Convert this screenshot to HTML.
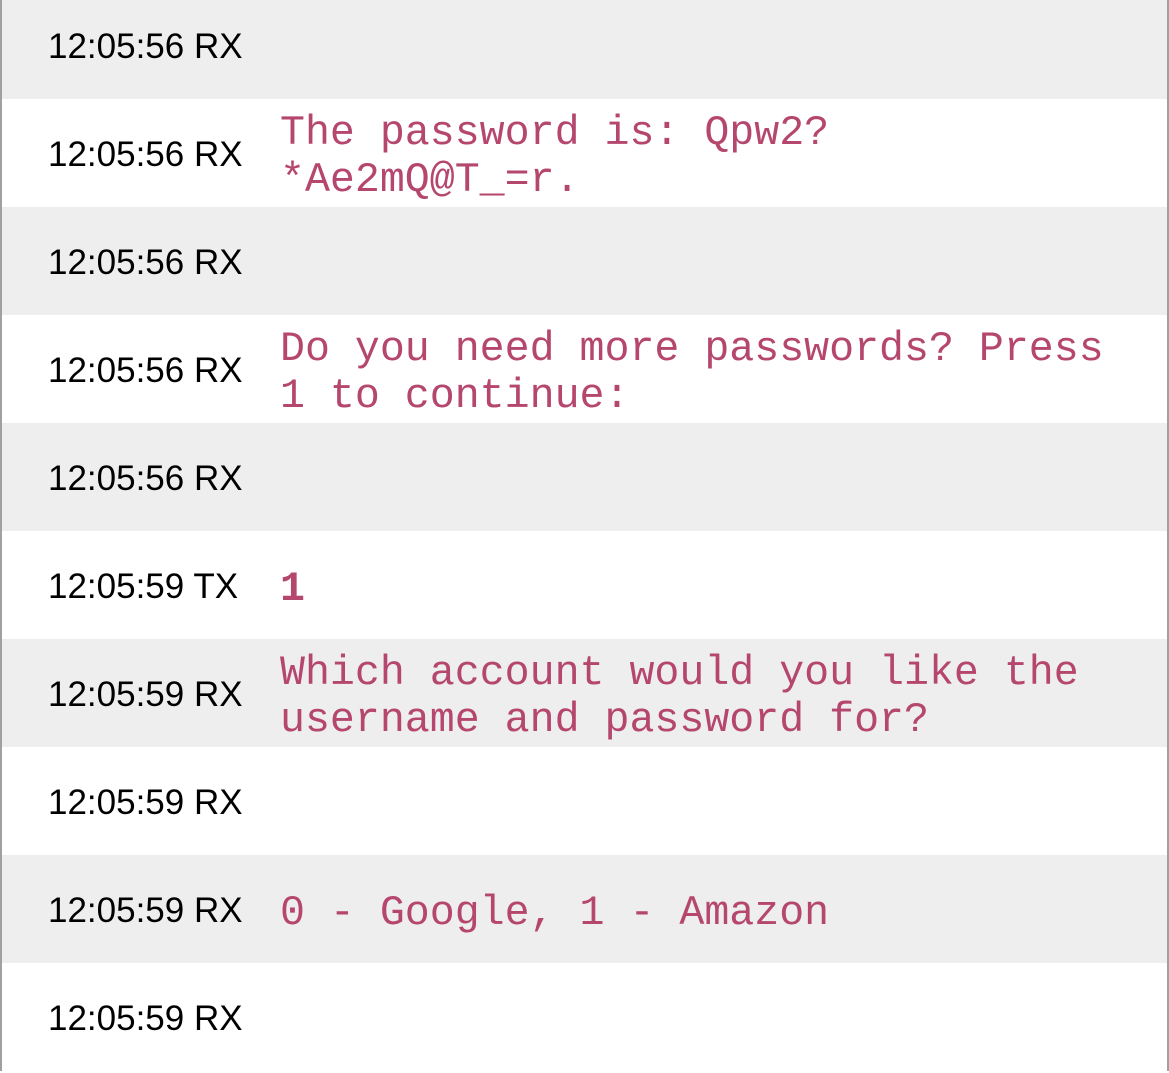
<!DOCTYPE html>
<html><head><meta charset="utf-8"><style>
body{margin:0;width:1169px;height:1068px;overflow:hidden;background:#fff;}
.wrap{position:absolute;left:0;top:-9px;width:1165px;border-left:2px solid #a0a0a0;border-right:2px solid #a0a0a0;}
.row{height:108px;position:relative;}
.g{background:#eeeeee;}
.ts{position:absolute;left:46px;top:2px;height:108px;line-height:108px;font-family:"Liberation Sans",sans-serif;font-size:35px;color:#000;white-space:nowrap;}
.m{position:absolute;left:278px;top:4px;height:108px;width:880px;display:flex;align-items:center;font-family:"Liberation Mono",monospace;font-size:41.6px;line-height:47px;color:#b5466e;white-space:pre-wrap;}
.m span{display:block;}
.b{font-weight:bold;}
</style></head><body><div class="wrap">
<div class="row g"><div class="ts">12:05:56 RX</div></div>
<div class="row"><div class="ts">12:05:56 RX</div><div class="m"><span>The password is: Qpw2?<br>*Ae2mQ@T_=r.</span></div></div>
<div class="row g"><div class="ts">12:05:56 RX</div></div>
<div class="row"><div class="ts">12:05:56 RX</div><div class="m"><span>Do you need more passwords? Press<br>1 to continue:</span></div></div>
<div class="row g"><div class="ts">12:05:56 RX</div></div>
<div class="row"><div class="ts">12:05:59 TX</div><div class="m"><span class="b">1</span></div></div>
<div class="row g"><div class="ts">12:05:59 RX</div><div class="m"><span>Which account would you like the<br>username and password for?</span></div></div>
<div class="row"><div class="ts">12:05:59 RX</div></div>
<div class="row g"><div class="ts">12:05:59 RX</div><div class="m"><span>0 - Google, 1 - Amazon</span></div></div>
<div class="row"><div class="ts">12:05:59 RX</div></div>
</div></body></html>
